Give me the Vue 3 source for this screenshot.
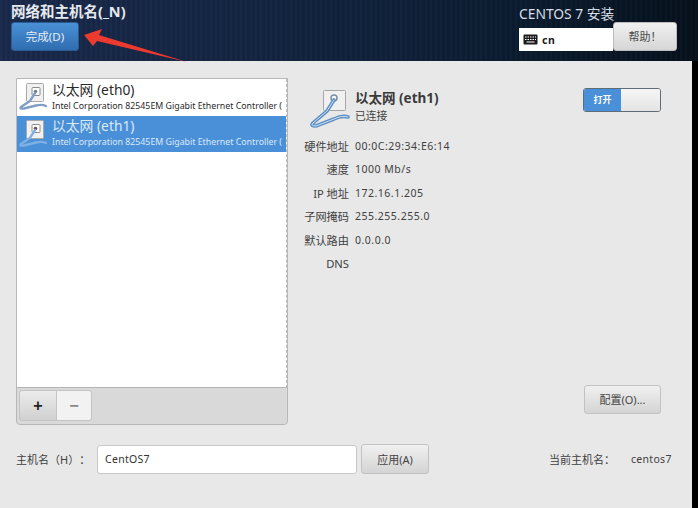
<script setup>
const devices = [
  { name: '以太网 (eth0)', selected: false },
  { name: '以太网 (eth1)', selected: true }
]
const details = [
  ['硬件地址', '00:0C:29:34:E6:14'],
  ['速度', '1000 Mb/s'],
  ['IP 地址', '172.16.1.205'],
  ['子网掩码', '255.255.255.0'],
  ['默认路由', '0.0.0.0'],
  ['DNS', '']
]
</script>

<template>
  <div class="page">
    <header class="topbar">
      <div class="top-left">
        <div class="title">网络和主机名(_N)</div>
        <button class="done">完成(D)</button>
      </div>
      <div class="top-right">
        <div class="product">CENTOS 7 安装</div>
        <div class="top-controls">
          <div class="kbd">
            <svg class="kbd-icon" width="15" height="11" viewBox="0 0 15 11">
              <rect x="0.5" y="0.5" width="14" height="10" rx="1" fill="#1a1a1a" />
              <path d="M2 3h1.500M4.500 3H6M7 3h1.500M9.500 3H11M12 3h1M2 5.500h1.500M4.500 5.500H6M7 5.500h1.500M9.500 5.500H11M12 5.500h1M3.500 8h8" stroke="#fff" stroke-width="1.100" />
            </svg>
            <span>cn</span>
          </div>
          <button class="help">帮助！</button>
        </div>
      </div>
    </header>

    <div class="body">
      <main class="main">
        <div class="upper">
          <section class="panel">
            <div class="list">
              <div v-for="d in devices" :key="d.name" class="device" :class="{ selected: d.selected }">
                <svg class="dev-icon" width="29" height="30" viewBox="0 0 29 30">
                  <rect x="7.500" y="1.500" width="17" height="18" rx="1" fill="#f1f1f1" stroke="#a9a9a9" />
                  <rect x="13" y="5.500" width="8" height="8" rx="1" fill="#fff" stroke="#8c8c8c" />
                  <circle cx="16.500" cy="9.500" r="1.800" :fill="d.selected ? '#7a4a4a' : '#6f7f96'" />
                  <path d="M16 11 L11 19 L2 25 Q0 27 5 26.500 L17 23.500 Q23 22 27 24" fill="none" :stroke="d.selected ? '#7fb0e4' : '#7f9fc6'" stroke-width="2.400" stroke-linecap="round" />
                </svg>
                <div class="dev-text">
                  <div class="dev-name">{{ d.name }}</div>
                  <div class="dev-desc">Intel Corporation 82545EM Gigabit Ethernet Controller (</div>
                </div>
              </div>
            </div>
            <div class="toolbar">
              <button class="tool add">+</button>
              <button class="tool remove">−</button>
            </div>
          </section>

          <section class="detail">
            <div class="detail-head">
              <svg class="big-icon" width="40" height="42" viewBox="0 0 40 42">
                <rect x="13.500" y="2.500" width="22" height="20" rx="1" fill="#f0f0f0" stroke="#a6a6a6" />
                <circle cx="24" cy="10" r="3" fill="#fff" stroke="#7c8ea6" stroke-width="1.500" />
                <path d="M24 12 L17 23 L3 35 Q0 38 6 38 L24 31 Q32 27 38 29" fill="none" stroke="#5d8fc4" stroke-width="3.600" stroke-linecap="round" />
                <path d="M24 12 L17 23 L3 35 Q0 38 6 38 L24 31 Q32 27 38 29" fill="none" stroke="#cfe0f2" stroke-width="1" stroke-linecap="round" />
              </svg>
              <div class="head-text">
                <div class="head-name">以太网 (eth1)</div>
                <div class="head-state">已连接</div>
              </div>
              <div class="switch">
                <span class="switch-on">打开</span>
                <span class="switch-knob"></span>
              </div>
            </div>
            <div class="props">
              <template v-for="p in details" :key="p[0]">
                <span class="prop-label">{{ p[0] }}</span>
                <span class="prop-value">{{ p[1] }}</span>
              </template>
            </div>
            <button class="btn config">配置(O)...</button>
          </section>
        </div>

        <div class="hostrow">
          <span class="host-label">主机名（H）：</span>
          <input class="host-input" value="CentOS7" />
          <button class="btn apply">应用(A)</button>
          <span class="current">当前主机名：</span>
          <span class="current-value">centos7</span>
        </div>
      </main>
      <div class="strip"></div>
    </div>

    <svg class="arrow" width="120" height="36" viewBox="0 0 120 36">
      <path d="M1 6 L19 0 L16 6 L104 33 L14 12 L10 17 Z" fill="#ec3b2e" />
    </svg>
  </div>
</template>

<style>
html, body { margin: 0; background: #e8e8e8; }
</style>

<style scoped>
.page {
  position: relative;
  width: 698px;
  height: 508px;
  overflow: hidden;
  display: flex;
  flex-direction: column;
  font-family: "Noto Sans", "Noto Sans CJK SC", sans-serif;
  color: #2e3436;
  text-spacing-trim: space-all;
}
.topbar {
  height: 61px;
  flex: none;
  box-sizing: border-box;
  display: flex;
  justify-content: space-between;
  color: #fff;
  background:
    repeating-linear-gradient(90deg, rgba(255,255,255,0.015) 0 2px, rgba(0,0,0,0.04) 2px 5px),
    linear-gradient(90deg, #1a2a4c 0%, #12233f 45%, #0b1c30 75%, #06111c 100%);
}
.top-left { padding: 3px 0 0 11px; }
.title {
  font-size: 14.500px;
  line-height: 17px;
  font-weight: 700;
  color: #e6e9ee;
  white-space: nowrap;
}
.done {
  display: block;
  width: 68px;
  height: 29px;
  margin-top: 2px;
  padding: 0;
  border: 1px solid #2a5c94;
  border-radius: 3px;
  background: linear-gradient(#4a90d6, #2f6db0);
  color: #e4edf6;
  font: 11.500px/1 "Noto Sans", "Noto Sans CJK SC", sans-serif;
}
.top-right { width: 179px; padding-top: 5px; }
.product {
  font-size: 13.800px;
  line-height: 17px;
  color: #d8dde3;
  white-space: nowrap;
}
.top-controls { display: flex; align-items: flex-end; }
.kbd {
  width: 94px;
  height: 23px;
  box-sizing: border-box;
  background: #fff;
  color: #1c1c1c;
  display: flex;
  align-items: center;
  gap: 4px;
  padding-left: 4px;
  font-size: 10.500px;
  font-weight: 700;
  letter-spacing: 0.5px;
}
.kbd-icon { flex: none; }
.help {
  width: 64px;
  height: 29px;
  padding: 0;
  border: 1px solid #bcbcbc;
  border-radius: 3px;
  background: linear-gradient(#f0f0f0, #d6d6d6);
  color: #4a4a4a;
  font: 11px/1 "Noto Sans", "Noto Sans CJK SC", sans-serif;
}
.body { flex: 1; display: flex; min-height: 0; }
.main {
  flex: 1;
  min-width: 0;
  background: #e8e8e8;
  box-sizing: border-box;
  padding: 17px 0 0 16px;
}
.strip { width: 6px; background: #000; }
.upper { display: flex; height: 347px; }
.panel {
  width: 272px;
  flex: none;
  box-sizing: border-box;
  border: 1px solid #b8b8b8;
  border-radius: 0 0 4px 4px;
  display: flex;
  flex-direction: column;
  background: #d9d9d9;
}
.list {
  flex: 1;
  background: #fff;
  border-bottom: 1px solid #b4b4b4;
  border-right: 1px dashed #bbb;
  min-height: 0;
  overflow: hidden;
}
.device {
  height: 36.500px;
  display: flex;
  align-items: center;
  box-sizing: border-box;
  padding-left: 2px;
  white-space: nowrap;
}
.device.selected { background: #4a90d9; color: #dce9f6; }
.dev-icon { flex: none; margin-right: 4px; }
.dev-text { min-width: 0; overflow: hidden; margin-top: -2px; }
.dev-name { font-size: 13.800px; line-height: 18px; margin-bottom: 1px; color: #2a2a2a; }
.dev-desc { font-size: 8.800px; line-height: 12px; color: #2a2a2a; }
.selected .dev-name, .selected .dev-desc { color: #dce9f6; }
.toolbar {
  height: 36px;
  flex: none;
  box-sizing: border-box;
  padding: 2px 0 0 2px;
  display: flex;
}
.tool {
  height: 31px;
  padding: 0;
  border: 1px solid #c4c4c4;
  font: 700 16px/1 "Liberation Sans", sans-serif;
}
.add {
  width: 38px;
  background: linear-gradient(#ececec, #d0d0d0);
  color: #222;
  border-radius: 3px 0 0 3px;
}
.remove {
  width: 35px;
  background: #f2f2f2;
  color: #888;
  border-left: none;
  border-radius: 0 3px 3px 0;
}
.detail {
  flex: 1;
  min-width: 0;
  display: flex;
  flex-direction: column;
  padding: 0 31px 11px 0;
}
.detail-head {
  display: flex;
  align-items: flex-start;
  padding: 10px 0 0 22px;
  height: 46px;
  box-sizing: border-box;
}
.big-icon { flex: none; margin-right: 5px; }
.head-text { flex: 1; padding-top: 1px; }
.head-name { font-size: 13.500px; line-height: 18px; font-weight: 700; color: #3a3a3a; }
.head-state { font-size: 10.800px; line-height: 17px; color: #444; }
.switch {
  width: 78px;
  height: 24px;
  box-sizing: border-box;
  border: 1px solid #5e6b78;
  border-radius: 3px;
  display: flex;
  overflow: hidden;
  background: #efefef;
}
.switch-on {
  width: 37px;
  background: #4a90d9;
  color: #fff;
  font-size: 9px;
  font-weight: 700;
  line-height: 22px;
  text-align: center;
}
.switch-knob { flex: 1; background: linear-gradient(#f6f6f6, #e4e4e4); }
.props {
  display: grid;
  grid-template-columns: 61px auto;
  grid-auto-rows: 23.500px;
  column-gap: 6px;
  justify-content: start;
  align-items: center;
  margin-top: 10px;
  font-size: 10.500px;
  color: #3f3f3f;
  letter-spacing: 0.5px;
}
.prop-label { text-align: right; white-space: nowrap; letter-spacing: 0; font-size: 11.200px; }
.prop-value { white-space: nowrap; }
.btn {
  padding: 0;
  border: 1px solid #c2c2c2;
  border-radius: 3px;
  background: linear-gradient(#f0f0f0, #d4d4d4);
  color: #444;
  font: 11px/1 "Noto Sans", "Noto Sans CJK SC", sans-serif;
}
.config {
  width: 77px;
  height: 29px;
  margin-top: auto;
  align-self: flex-end;
}
.hostrow {
  display: flex;
  align-items: center;
  height: 30px;
  margin-top: 19px;
  font-size: 11px;
  color: #3f3f3f;
  white-space: nowrap;
}
.host-label { width: 81px; flex: none; }
.host-input {
  width: 260px;
  height: 29px;
  box-sizing: border-box;
  flex: none;
  padding: 0 0 0 7px;
  border: 1px solid #c8c8c8;
  border-radius: 3px;
  background: #fff;
  color: #333;
  font: 10.500px "Noto Sans", sans-serif;
  letter-spacing: 0.3px;
  outline: none;
}
.apply { width: 68px; height: 30px; margin-left: 4px; flex: none; }
.current { margin-left: 120px; }
.current-value { margin-left: 16px; font-size: 10.500px; letter-spacing: 0.3px; }
.arrow { position: absolute; left: 83px; top: 29px; pointer-events: none; }
</style>
